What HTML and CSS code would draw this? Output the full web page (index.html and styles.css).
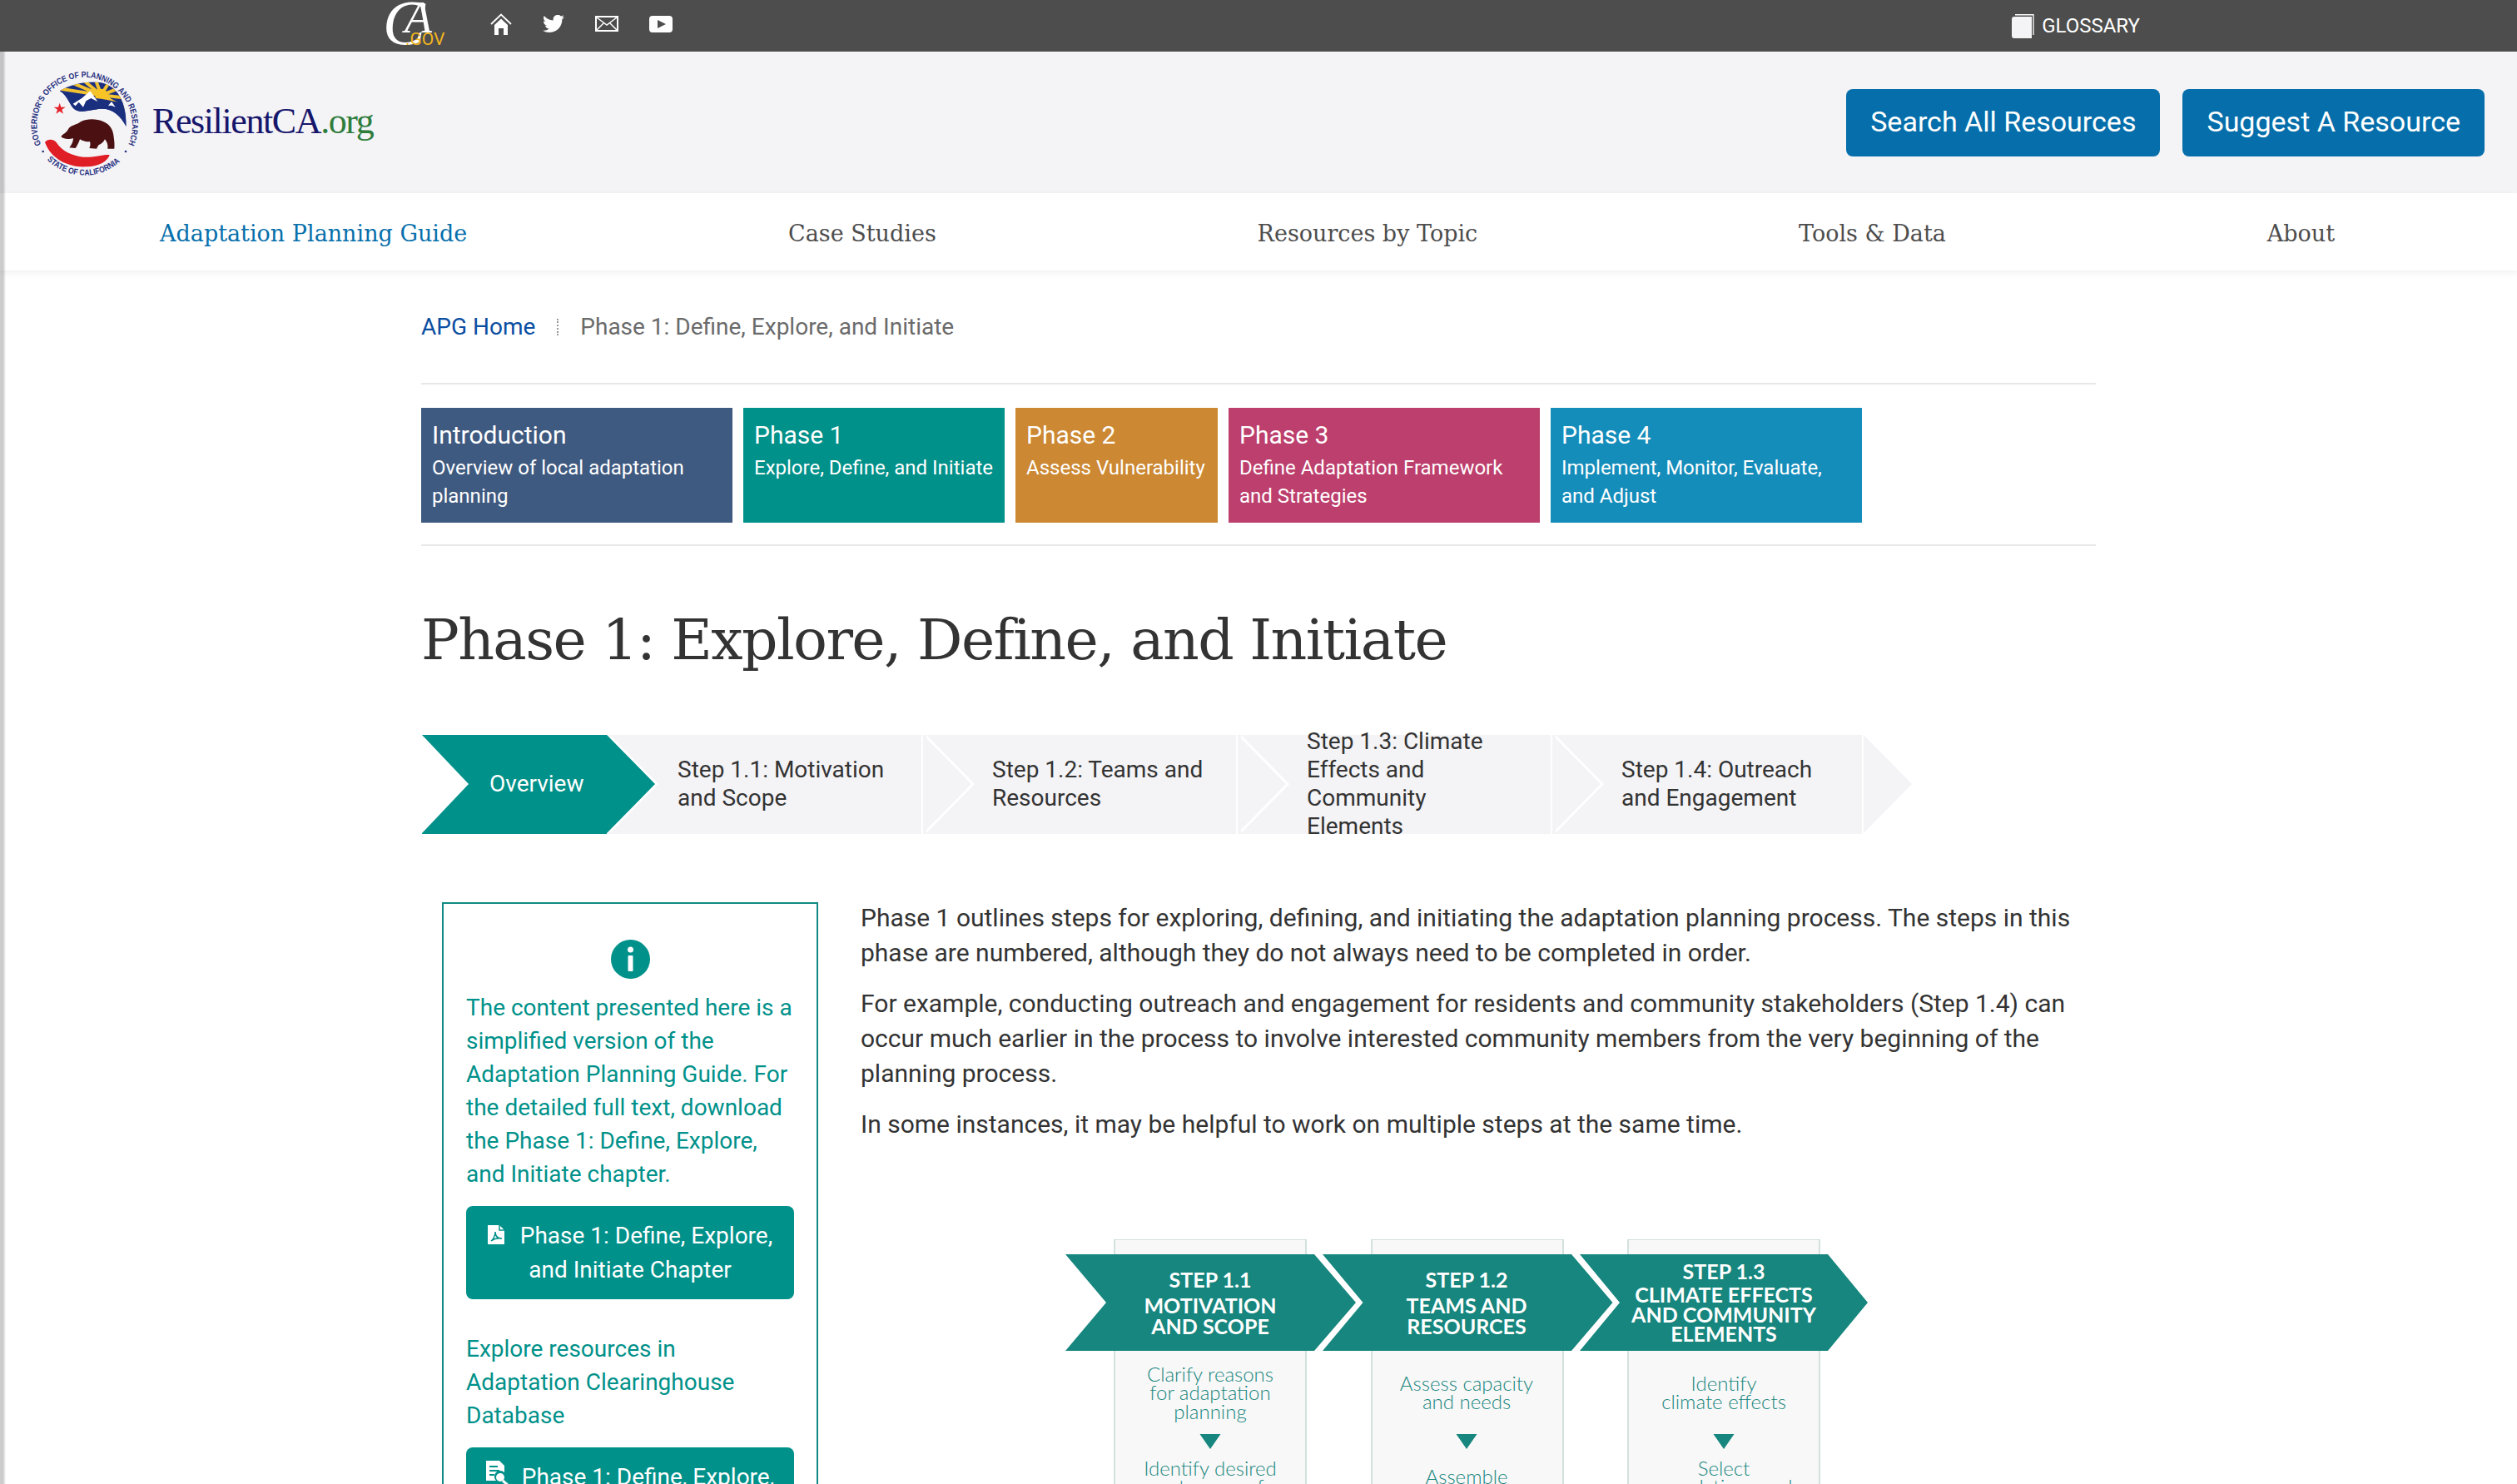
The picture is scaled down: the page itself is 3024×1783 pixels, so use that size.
FILE: index.html
```html
<!DOCTYPE html>
<html lang="en">
<head>
    <meta charset="UTF-8">
    <meta name="viewport" content="width=device-width, initial-scale=1.0">
    <title>Phase 1: Explore, Define, and Initiate</title>
    <link rel="stylesheet" href="styles.css">
</head>
<body>
    <div class="edge-shade"></div>
    <div class="top-bar">
        <svg class="ca-logo" viewBox="0 0 74 56" aria-label="CA.gov">
            <text class="ca-script ca-c" x="0" y="52">C</text>
            <text class="ca-script ca-a" x="26" y="38">A</text>
            <text class="ca-gov" x="27" y="53">.GOV</text>
        </svg>
        <div class="top-icons">
            <svg width="26" height="26" viewBox="0 0 26 26"><path d="M1 13 13 1.500 25 13" fill="none" stroke="#fff" stroke-width="1.800"/><path d="M5 14 13 6.500 21 14V26H16V18H10V26H5Z" fill="#fff"/></svg>
            <svg width="26" height="22" viewBox="0 0 24 20"><path transform="translate(0 -2.500)" d="M23.953 4.570a10 10 0 01-2.825.775 4.958 4.958 0 002.163-2.723c-.951.555-2.005.959-3.127 1.184a4.920 4.920 0 00-8.384 4.482C7.690 8.095 4.067 6.130 1.640 3.162a4.822 4.822 0 00-.666 2.475c0 1.710.870 3.213 2.188 4.096a4.904 4.904 0 01-2.228-.616v.060a4.923 4.923 0 003.946 4.827 4.996 4.996 0 01-2.212.085 4.936 4.936 0 004.604 3.417 9.867 9.867 0 01-6.102 2.105c-.390 0-.779-.023-1.170-.067a13.995 13.995 0 007.557 2.209c9.053 0 13.998-7.496 13.998-13.985 0-.210 0-.420-.015-.630A9.935 9.935 0 0024 4.590z" fill="#fff"/></svg>
            <svg width="28" height="19" viewBox="0 0 28 19"><rect x="1" y="1" width="26" height="17" fill="none" stroke="#fff" stroke-width="2"/><path d="M2 2 14 11 26 2M2 17 10.500 8.500M26 17 17.500 8.500" fill="none" stroke="#fff" stroke-width="1.500"/></svg>
            <svg width="28" height="20" viewBox="0 0 28 20"><rect width="28" height="20" rx="4" fill="#fff"/><path d="M10 5 20 10 10 15Z" fill="#4d4d4d"/></svg>
        </div>
        <a class="glossary" href="#">
            <svg width="27" height="29" viewBox="0 0 27 29"><path d="M4 .750H26V25" fill="none" stroke="#fff" stroke-width="1.300"/><path d="M3 3H24V29H3A3 3 0 010 26V6A3 3 0 013 3Z" fill="#f4f3f6"/></svg>
            GLOSSARY
        </a>
    </div>

    <header class="site-header">
        <a class="brand" href="#">
            <svg class="seal" viewBox="0 0 510 450" aria-label="Governor's Office of Planning and Research seal">
                <defs>
                    <path id="ring-top" d="M88 305A172 172 0 1 1 402 305"/>
                    <path id="ring-bottom" d="M110 360A191 191 0 0 0 380 360"/>
                    <clipPath id="flag-clip"><path d="M155 112C200 85 260 75 305 82 350 92 395 130 395 240 370 195 340 170 290 178 260 182 225 195 205 175 190 160 180 125 155 112Z"/></clipPath>
                </defs>
                <text class="seal-text"><textPath href="#ring-top" textLength="684" lengthAdjust="spacingAndGlyphs">GOVERNOR'S OFFICE OF PLANNING AND RESEARCH</textPath></text>
                <text class="seal-text"><textPath href="#ring-bottom" textLength="290" lengthAdjust="spacingAndGlyphs">STATE OF CALIFORNIA</textPath></text>
                <circle cx="95" cy="330" r="4" fill="#26307f"/>
                <circle cx="393" cy="330" r="4" fill="#26307f"/>
                <g clip-path="url(#flag-clip)">
                    <rect x="140" y="70" width="270" height="180" fill="#1b2f7f"/>
                    <path d="M305 127 130 100M305 127 170 70M305 127 225 60M305 127 280 60M305 127 345 60M305 127 400 90M305 127 420 140M305 127 420 190" stroke="#f2c230" stroke-width="12"/>
                    <circle cx="305" cy="127" r="23" fill="#f7c325"/>
                    <path d="M185 130 305 140 410 160 400 250 290 180 205 190Z" fill="#1b2f7f"/>
                    <path d="M203 158 235 138 265 112 292 150 268 138 250 148 240 170 224 152 212 166ZM330 165 342 150 356 170 342 164Z" fill="#fff"/>
                </g>
                <path d="M155 155 160 170 176 170 163 179 168 194 155 185 142 194 147 179 134 170 150 170Z" fill="#e5232b"/>
                <path d="M160 277C166 266 180 264 186 250 194 234 214 236 232 222 255 210 290 212 312 222 336 232 348 252 350 278 353 296 353 308 352 320L328 320C330 306 326 296 318 286 312 298 304 304 296 306 292 312 290 316 288 320L262 318C266 310 266 302 264 294 250 296 238 292 228 286 224 298 218 310 212 318L190 316C198 306 204 294 204 282 192 286 172 288 160 277Z" fill="#4b1012"/>
                <path d="M102 297C112 283 135 285 145 300 165 330 200 345 240 350 280 352 310 340 335 342 330 362 300 385 250 385 190 388 125 360 102 297Z" fill="#e01e26"/>
            </svg>
            <span class="brand-name">ResilientCA<span class="brand-org">.org</span></span>
        </a>
        <div class="header-buttons">
            <a class="btn-blue" href="#">Search All Resources</a>
            <a class="btn-blue" href="#">Suggest A Resource</a>
        </div>
    </header>

    <nav class="main-nav">
        <a class="active" href="#">Adaptation Planning Guide</a>
        <a href="#">Case Studies</a>
        <a href="#">Resources by Topic</a>
        <a href="#">Tools &amp; Data</a>
        <a href="#">About</a>
    </nav>

    <main class="page">
        <div class="breadcrumb">
            <a href="#">APG Home</a>
            <span class="crumb-sep"></span>
            <span>Phase 1: Define, Explore, and Initiate</span>
        </div>

        <div class="phases">
            <a class="phase phase-intro" href="#"><h4>Introduction</h4>Overview of local adaptation planning</a>
            <a class="phase phase-1" href="#"><h4>Phase 1</h4>Explore, Define, and Initiate</a>
            <a class="phase phase-2" href="#"><h4>Phase 2</h4>Assess Vulnerability</a>
            <a class="phase phase-3" href="#"><h4>Phase 3</h4>Define Adaptation Framework and Strategies</a>
            <a class="phase phase-4" href="#"><h4>Phase 4</h4>Implement, Monitor, Evaluate, and Adjust</a>
        </div>

        <h1>Phase 1: Explore, Define, and Initiate</h1>

        <ul class="steps">
            <li class="step step-current"><i class="notch"></i><span>Overview</span></li>
            <li class="step"><span>Step 1.1: Motivation and Scope</span></li>
            <li class="step"><span>Step 1.2: Teams and Resources</span></li>
            <li class="step"><span>Step 1.3: Climate Effects and Community Elements</span></li>
            <li class="step"><span>Step 1.4: Outreach and Engagement</span></li>
        </ul>

        <div class="columns">
            <aside class="note">
                <svg class="note-icon" width="47" height="47" viewBox="0 0 47 47"><circle cx="23.500" cy="23.500" r="23.500" fill="#00918a"/><circle cx="23.500" cy="12" r="3.500" fill="#fff"/><rect x="20.500" y="19" width="6" height="19" rx="1" fill="#fff"/></svg>
                <p>The content presented here is a simplified version of the Adaptation Planning Guide. For the detailed full text, download the Phase 1: Define, Explore, and Initiate chapter.</p>
                <a class="btn-teal" href="#">
                    <svg class="btn-icon" width="20" height="23" viewBox="0 0 20 23"><path d="M0 0H14L20 6V23H0Z" fill="#fff"/><path d="M14 0V6H20" fill="none" stroke="#00918a" stroke-width="1.500"/><path d="M4 19C7 17 9 12 9 8 9 13 12 16 17 16 12 15 8 16 4 19Z" fill="none" stroke="#00918a" stroke-width="1.500"/></svg>Phase 1: Define, Explore, and Initiate Chapter
                </a>
                <p class="note-explore">Explore resources in Adaptation Clearinghouse Database</p>
                <a class="btn-teal" href="#">
                    <svg class="btn-icon btn-icon-search" width="28" height="30" viewBox="0 0 28 30"><path d="M0 0H16L22 6V14A7 7 0 0012 24H0Z" fill="#fff"/><path d="M4 7H14M4 12H16M4 17H10" stroke="#00918a" stroke-width="2"/><circle cx="17" cy="20" r="5" fill="#fff"/><path d="M20 24 27 30" stroke="#fff" stroke-width="3"/></svg>Phase 1: Define, Explore, and Initiate Resources
                </a>
            </aside>

            <section class="body-copy">
                <p>Phase 1 outlines steps for exploring, defining, and initiating the adaptation planning process. The steps in this phase are numbered, although they do not always need to be completed in order.</p>
                <p>For example, conducting outreach and engagement for residents and community stakeholders (Step 1.4) can occur much earlier in the process to involve interested community members from the very beginning of the planning process.</p>
                <p>In some instances, it may be helpful to work on multiple steps at the same time.</p>

                <svg class="diagram" viewBox="1280 1487 964 320" aria-label="Phase 1 steps diagram">
                    <rect class="d-panel" x="1339" y="1487" width="230" height="330"/>
                    <rect class="d-panel" x="1648" y="1487" width="230" height="330"/>
                    <rect class="d-panel" x="1956" y="1487" width="230" height="330"/>
                    <path class="d-arrow" d="M1280 1505H1579L1629 1563 1579 1621H1280L1329 1563Z"/>
                    <path class="d-arrow" d="M1589 1505H1888L1937.500 1563 1888 1621H1589L1637.500 1563Z"/>
                    <path class="d-arrow" d="M1898 1505H2196L2244 1563 2196 1621H1898L1946 1563Z"/>
                    <text class="d-head" x="1454" y="1545">STEP 1.1</text>
                    <text class="d-head" x="1454" y="1576">MOTIVATION</text>
                    <text class="d-head" x="1454" y="1601">AND SCOPE</text>
                    <text class="d-head" x="1762" y="1545">STEP 1.2</text>
                    <text class="d-head" x="1762" y="1576">TEAMS AND</text>
                    <text class="d-head" x="1762" y="1601">RESOURCES</text>
                    <text class="d-head" x="2071" y="1535">STEP 1.3</text>
                    <text class="d-head" x="2071" y="1563">CLIMATE EFFECTS</text>
                    <text class="d-head" x="2071" y="1587">AND COMMUNITY</text>
                    <text class="d-head" x="2071" y="1610">ELEMENTS</text>
                    <text class="d-copy" x="1454" y="1658">Clarify reasons</text>
                    <text class="d-copy" x="1454" y="1680">for adaptation</text>
                    <text class="d-copy" x="1454" y="1703">planning</text>
                    <text class="d-copy" x="1454" y="1771">Identify desired</text>
                    <text class="d-copy" x="1454" y="1793">outcomes of</text>
                    <text class="d-copy" x="1762" y="1669">Assess capacity</text>
                    <text class="d-copy" x="1762" y="1691">and needs</text>
                    <text class="d-copy" x="1762" y="1781">Assemble</text>
                    <text class="d-copy" x="2071" y="1669">Identify</text>
                    <text class="d-copy" x="2071" y="1691">climate effects</text>
                    <text class="d-copy" x="2071" y="1771">Select</text>
                    <text class="d-copy" x="2071" y="1793">populations and</text>
                    <path class="d-down" d="M1441.500 1721H1466.500L1454 1739Z"/>
                    <path class="d-down" d="M1749.500 1721H1774.500L1762 1739Z"/>
                    <path class="d-down" d="M2058.500 1721H2083.500L2071 1739Z"/>
                </svg>
            </section>
        </div>
    </main>
</body>
</html>
```

FILE: styles.css
```css
* {
    margin: 0;
    padding: 0;
    box-sizing: border-box;
}

html, body {
    height: 100vh;
    overflow: hidden;
}

body {
    font-family: 'Roboto', 'Liberation Sans', sans-serif;
    background-color: #fff;
    color: #333;
}

a {
    text-decoration: none;
    color: inherit;
}

.edge-shade {
    position: fixed;
    left: 0;
    top: 62px;
    bottom: 0;
    width: 7px;
    background: linear-gradient(to right, rgba(0, 0, 0, 0.2) 55%, rgba(0, 0, 0, 0));
}

/* top bar */
.top-bar {
    height: 62px;
    background-color: #4d4d4d;
    display: flex;
    align-items: center;
    padding: 0 453px 0 460px;
}

.ca-logo {
    width: 74px;
    height: 56px;
    margin-right: 55px;
    margin-bottom: 4px;
    overflow: visible;
}

.ca-script {
    font-family: 'Liberation Serif', serif;
    font-style: italic;
    fill: #fff;
}

.ca-c {
    font-size: 76px;
}

.ca-a {
    font-size: 54px;
}

.ca-gov {
    font-family: 'Roboto', sans-serif;
    font-size: 21px;
    fill: #f2b51f;
}

.top-icons {
    display: flex;
    align-items: center;
    gap: 37px;
    padding-bottom: 5px;
}

.glossary {
    margin-left: auto;
    display: flex;
    align-items: center;
    gap: 9px;
    color: #fff;
    font-size: 24px;
}

/* header */
.site-header {
    height: 170px;
    background-color: #f4f3f6;
    display: flex;
    align-items: center;
    justify-content: space-between;
    padding: 0 39px 0 20px;
}

.brand {
    display: flex;
    align-items: center;
    gap: 13px;
}

.seal {
    width: 170px;
    height: 150px;
}

.seal-text {
    font-family: 'Liberation Sans', sans-serif;
    font-weight: bold;
    font-size: 30px;
    fill: #26307f;
}

.brand-name {
    font-family: 'Liberation Serif', serif;
    font-size: 44px;
    letter-spacing: -1.400px;
    color: #16166b;
    margin-left: -20px;
    margin-bottom: 4px;
}

.brand-org {
    color: #2e7d3c;
}

.header-buttons {
    display: flex;
    gap: 27px;
}

.btn-blue {
    height: 81px;
    display: flex;
    align-items: center;
    padding: 0 29px 2px;
    background-color: #066fab;
    color: #fff;
    font-size: 34px;
    border-radius: 8px;
}

/* nav */
.main-nav {
    height: 93px;
    display: flex;
    align-items: center;
    justify-content: space-between;
    padding: 3px 219px 0 192px;
    box-shadow: 0 3px 8px rgba(0, 0, 0, 0.06);
    font-family: 'DejaVu Serif', serif;
    font-size: 27px;
    color: #4d4d4d;
}

.main-nav .active {
    color: #066fab;
}

/* page */
.page {
    width: 2012px;
    margin: 0 auto;
}

.breadcrumb {
    height: 137px;
    display: flex;
    align-items: center;
    gap: 26px;
    font-size: 28px;
    color: #6b6b6b;
    border-bottom: 2px solid #e8e8e8;
}

.breadcrumb a {
    color: #0b4ea2;
}

.crumb-sep {
    height: 20px;
    border-left: 2px dotted #999;
}

.phases {
    display: flex;
    gap: 13px;
    padding: 28px 0 26px;
    border-bottom: 2px solid #e8e8e8;
}

.phase {
    width: 374px;
    height: 138px;
    padding: 15px 13px 0;
    color: #fff;
    font-size: 24px;
    line-height: 34px;
}

.phase h4 {
    font-weight: 400;
    font-size: 30px;
    line-height: 36px;
    margin-bottom: 4px;
}

.phase-intro { background-color: #3f5a80; }
.phase-1 { background-color: #00918a; width: 314px; padding-right: 6px; }
.phase-2 { background-color: #cc8832; width: 243px; padding-right: 6px; }
.phase-3 { background-color: #bd3f6d; }
.phase-4 { background-color: #158dbb; }

h1 {
    font-family: 'DejaVu Serif', serif;
    font-weight: 400;
    font-size: 68px;
    letter-spacing: -1.600px;
    line-height: 90px;
    color: #333;
    margin: 68px 0 69px;
}

/* step arrows */
.steps {
    list-style: none;
    display: flex;
    height: 119px;
    font-size: 28px;
    line-height: 34px;
    color: #333;
}

.step {
    position: relative;
    width: 378px;
    display: flex;
    align-items: center;
    padding-left: 83px;
    padding-bottom: 2px;
    background-color: #f4f3f6;
    border-right: 2px solid #fff;
}

.step:last-child {
    width: 374px;
}

.step span {
    width: 262px;
}

.step::before,
.step::after {
    content: "";
    position: absolute;
    top: 0;
    left: calc(100% + 2px);
    border-top: 59.500px solid transparent;
    border-bottom: 59.500px solid transparent;
    border-left: 58px solid #f4f3f6;
    z-index: 2;
}

.step::before {
    margin-left: 4px;
    border-left-color: #fff;
    z-index: 1;
}

.step-current {
    width: 222px;
    padding-left: 81px;
    background-color: #00918a;
    color: #fff;
    border-right: 0;
    margin-left: 1px;
    margin-right: 2px;
}

.step-current::before,
.step-current::after {
    left: 100%;
}

.step-current::after {
    border-left-color: #00918a;
}

.notch {
    position: absolute;
    left: 0;
    top: 0;
    border-top: 59.500px solid transparent;
    border-bottom: 59.500px solid transparent;
    border-left: 56px solid #fff;
}

/* sidebar and copy */
.columns {
    display: grid;
    grid-template-columns: 452px 1456px;
    gap: 51px;
    margin: 82px 0 0 25px;
}

.note {
    border: 2px solid #0f8a84;
    padding: 43px 27px 0;
    font-size: 28px;
    line-height: 40px;
    color: #00918a;
}

.note-icon {
    display: block;
    margin: 0 auto 15px;
}

.btn-teal {
    display: block;
    margin: 18px 0 0;
    padding: 15px 10px;
    background-color: #00918a;
    color: #fff;
    text-align: center;
    line-height: 41px;
    border-radius: 8px;
}

.btn-icon {
    margin-right: 19px;
    vertical-align: -1px;
}

.btn-icon-search {
    margin-right: 15px;
}

.note-explore {
    margin-top: 40px;
}

.body-copy {
    font-size: 30px;
    line-height: 42px;
    color: #333;
    margin-top: -2px;
}

.body-copy p {
    margin-bottom: 19px;
}

.diagram {
    display: block;
    width: 964px;
    height: 320px;
    margin: 117px auto 0;
}

.d-panel {
    fill: #f8f8f8;
    stroke: #c5d8d5;
    stroke-width: 1.500;
}

.d-arrow {
    fill: #17867e;
}

.d-down {
    fill: #17867e;
}

.d-head {
    font-family: 'Lato', sans-serif;
    font-weight: 700;
    font-size: 25px;
    fill: #fff;
    text-anchor: middle;
}

.d-copy {
    font-family: 'Lato', sans-serif;
    font-weight: 300;
    font-size: 24px;
    fill: #17867e;
    text-anchor: middle;
}
```
